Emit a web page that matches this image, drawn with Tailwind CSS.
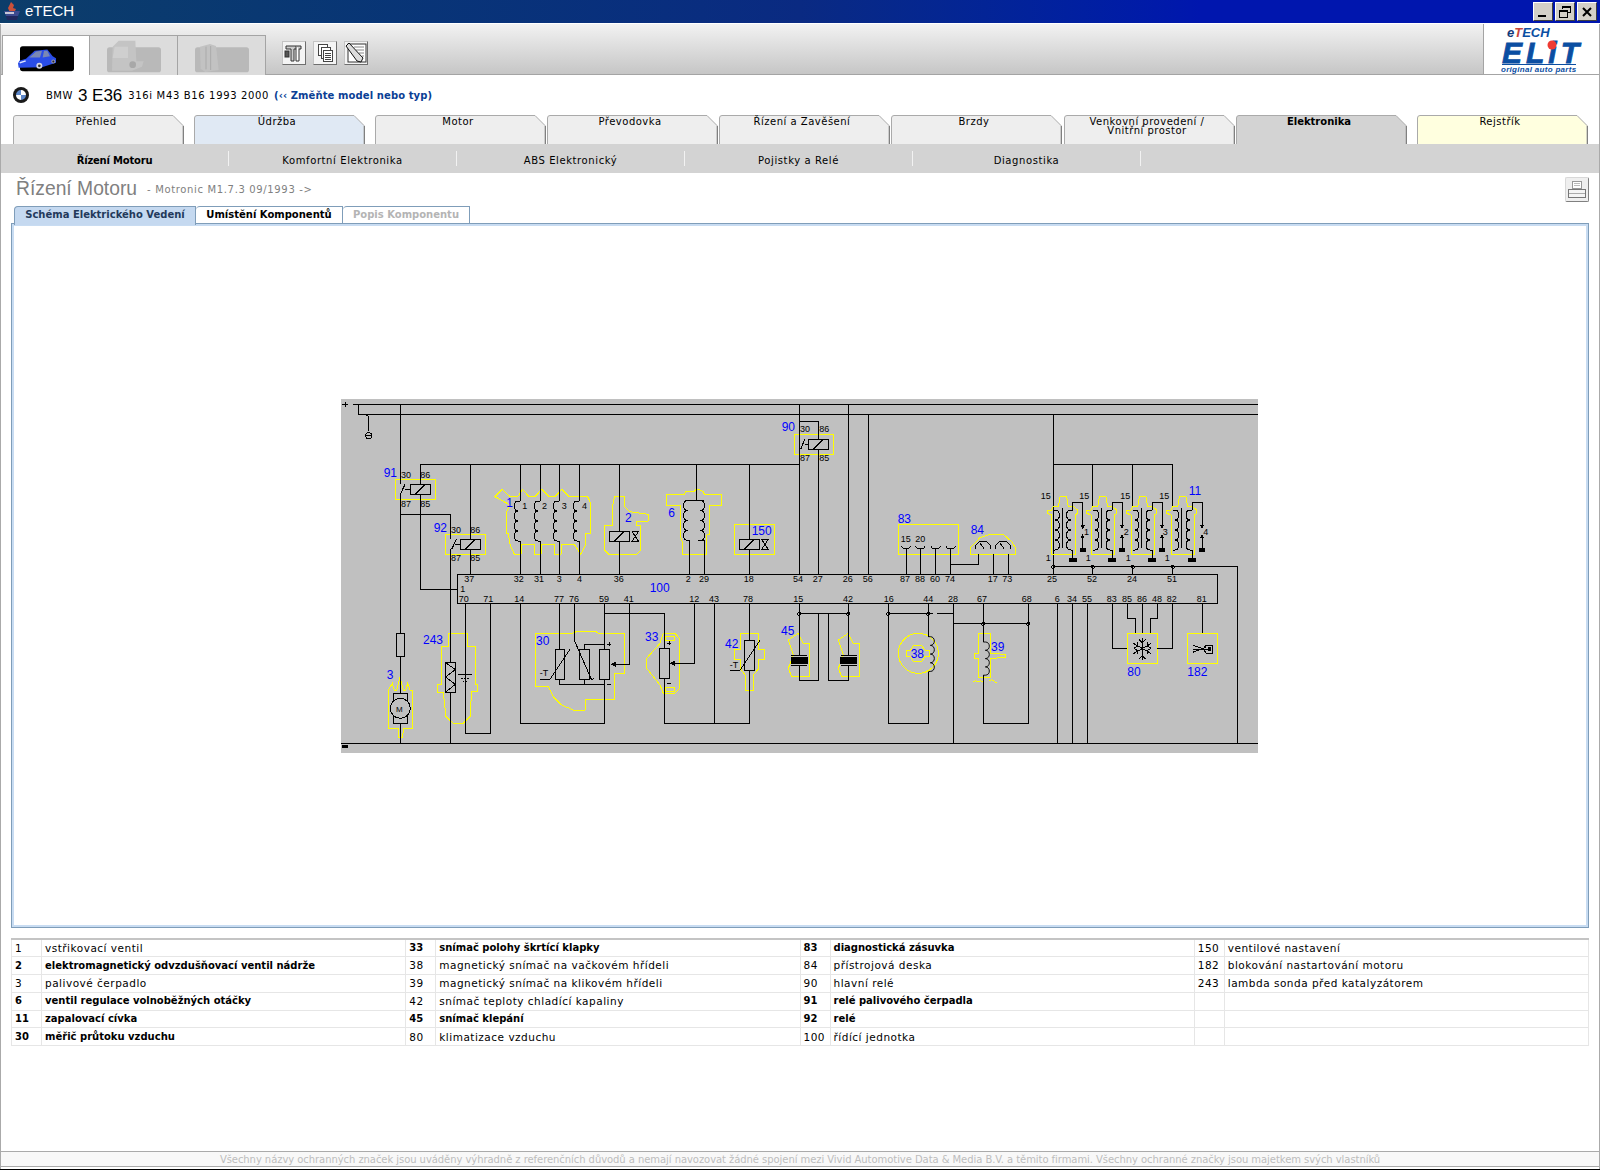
<!DOCTYPE html>
<html lang="cs">
<head>
    <meta charset="UTF-8">
    <title>eTECH</title>
    <script src="https://cdn.jsdelivr.net/npm/@tailwindcss/browser@4"></script>
</head>
<body class="bg-white font-['DejaVu_Sans',sans-serif] text-[10px] text-black">
<div class="flex flex-col w-[1600px] h-[1171px] overflow-hidden">

    <!-- title bar -->
    <div class="flex items-center h-[23px] shrink-0 bg-gradient-to-r from-[#0c3d6a] via-[#0a2a82] via-50% to-[#0016ae] to-75%">
        <svg class="ml-[2px] w-[21px] h-[21px]" viewBox="0 0 21 21">
            <path d="M9 1l3 3-1 3 3 1-2 4H8L6 7z" fill="#c9503a"/>
            <path d="M2 10h16l-2 5H4z" fill="#3b4a8f"/>
            <path d="M4 15h12l-1 4H5z" fill="#20285e"/>
            <path d="M3 11h9v2H3z" fill="#c6c6d8"/>
        </svg>
        <span class="ml-[2px] font-['Liberation_Sans',sans-serif] text-[15px] text-white">eTECH</span>
        <div class="ml-auto mr-[3px] flex gap-[2px]">
            <div class="w-[20px] h-[19px] bg-[#d4d0c8] border border-t-white border-l-white border-r-[#404040] border-b-[#404040] flex items-end justify-center pb-[3px]"><div class="w-[8px] h-[2px] bg-black mr-[2px]"></div></div>
            <div class="w-[20px] h-[19px] bg-[#d4d0c8] border border-t-white border-l-white border-r-[#404040] border-b-[#404040] flex items-center justify-center">
                <svg class="w-[12px] h-[12px]" viewBox="0 0 12 12" fill="none" stroke="#000" shape-rendering="crispEdges"><path d="M3.5 3V.5h8v6H9M3.5 1.5h8"/><path d="M.5 4.5h8v7h-8zM.5 5.5h8"/></svg>
            </div>
            <div class="w-[20px] h-[19px] bg-[#d4d0c8] border border-t-white border-l-white border-r-[#404040] border-b-[#404040] flex items-center justify-center">
                <svg class="w-[10px] h-[10px]" viewBox="0 0 10 10" stroke="#000" stroke-width="2"><path d="M1 1l8 8M9 1l-8 8"/></svg>
            </div>
        </div>
    </div>

    <div class="flex flex-col flex-1 border-x border-[#aaaaaa] mt-px min-h-0">
        <!-- toolbar -->
        <div class="flex h-[51px] shrink-0 bg-gradient-to-b from-[#f2f2f2] to-[#c6c6c6] border-b border-[#a4a4a4]">
            <div class="flex self-end ml-px -mb-px h-[40px]">
                <div class="w-[88px] bg-white border-x border-t border-[#a4a4a4] flex items-start justify-center pt-[9px]">
                    <svg class="w-[60px] h-[27px]" viewBox="42 135 180 80">
                        <rect x="54" y="138" width="162" height="75" rx="8" fill="#000"/>
                        <path d="M48 190l4-8 20-6 26-24 38-4 16 20 10 6v14l-42 13-70 2z" fill="#2a4de8"/>
                        <path d="M82 172l20-18 18-2-6 20zM122 172l4-20 10 0 8 16z" fill="#7a88b4"/>
                        <path d="M52 186l18-6 2 4-18 6z" fill="#dfe6ff"/>
                        <circle cx="112" cy="197" r="9" fill="#d6d6e6"/><circle cx="112" cy="197" r="4" fill="#333"/>
                        <circle cx="154" cy="184" r="6" fill="#99a"/><circle cx="154" cy="184" r="3" fill="#223"/>
                    </svg>
                </div>
                <div class="w-[88px] bg-[#dcdcdc] border-r border-t border-[#a4a4a4] flex items-start justify-center pt-[2px]">
                    <svg class="w-[60px] h-[36px]" viewBox="36 20 180 108">
                        <rect x="45" y="48" width="162" height="75" rx="8" fill="#b9b9b9"/>
                        <path d="M62 46l18-18h50l3 62h22l-5 16-30 12H60z" fill="#c4c4c4"/>
                        <path d="M68 46h40v34H62z" fill="#cfcfcf"/>
                        <circle cx="122" cy="100" r="10" fill="#a8a8a8"/>
                    </svg>
                </div>
                <div class="w-[88px] bg-[#dcdcdc] border-r border-t border-[#a4a4a4] flex items-start justify-center pt-[2px]">
                    <svg class="w-[60px] h-[36px]" viewBox="300 20 180 108">
                        <rect x="309" y="48" width="162" height="75" rx="8" fill="#b9b9b9"/>
                        <path d="M324 46l30-8 18 6 8 72-40 6-14-10z" fill="#c2c2c2"/>
                        <path d="M342 46v68M356 44v72" stroke="#aaaaaa" stroke-width="3"/>
                    </svg>
                </div>
            </div>
            <div class="flex gap-[7px] ml-[16px] mt-[17px]">
                <div class="w-[24px] h-[24px] bg-[#f4f4f4] border border-t-[#c4c4c4] border-l-[#c4c4c4] border-r-[#6e6e6e] border-b-[#6e6e6e] flex items-center justify-center">
                    <svg class="w-[20px] h-[20px]" viewBox="0 0 20 20" fill="none" stroke="#333"><path d="M2 3h15v3H10v12H7V6H2z" fill="#cccccc"/><path d="M12 3v15h3V6" fill="#ffffff"/><rect x="1" y="8" width="4" height="6" fill="#555"/></svg>
                </div>
                <div class="w-[24px] h-[24px] bg-[#f4f4f4] border border-t-[#c4c4c4] border-l-[#c4c4c4] border-r-[#6e6e6e] border-b-[#6e6e6e] flex items-center justify-center">
                    <svg class="w-[20px] h-[20px]" viewBox="0 0 20 20" fill="#fff" stroke="#444" shape-rendering="crispEdges"><rect x="3.5" y="1.5" width="9" height="11"/><rect x="6.5" y="4.5" width="9" height="11"/><rect x="8.5" y="7.5" width="9" height="11"/><path d="M10 10h6M10 12h6M10 14h6M10 16h6"/></svg>
                </div>
                <div class="w-[24px] h-[24px] bg-[#f4f4f4] border border-t-[#c4c4c4] border-l-[#c4c4c4] border-r-[#6e6e6e] border-b-[#6e6e6e] flex items-center justify-center">
                    <svg class="w-[22px] h-[22px]" viewBox="0 0 22 22"><rect x="3" y="2" width="18" height="18" fill="#fff" stroke="#333"/><path d="M9 5h10M11 8h8M14 11h5M17 14h2" stroke="#888"/><path d="M1 4l3-3 14 15-2 4-4-1z" fill="#ddd" stroke="#111"/></svg>
                </div>
            </div>
            <div class="ml-auto w-[116px] bg-white border-l border-[#a4a4a4]">
                <svg class="w-[115px] h-[50px]" viewBox="1485 24 115 50">
                    <text x="1508" y="37" font-family="Liberation Sans" font-weight="700" font-style="italic" font-size="13" fill="#0b4ea2"><tspan fill="#123a7a">e</tspan><tspan fill="#c8453c">T</tspan>ECH</text>
                    <text x="1503" y="63" font-family="Liberation Sans" font-weight="700" font-style="italic" font-size="30" fill="#0b4ea2" letter-spacing="4" stroke="#0b4ea2" stroke-width=".8">ELiT</text>
                    <circle cx="1553" cy="45" r="4.5" fill="#ee3b33"/>
                    <rect x="1503" y="64" width="74" height="1" fill="#0b4ea2"/>
                    <text x="1502" y="72" font-family="Liberation Sans" font-weight="700" font-style="italic" font-size="8" fill="#0b4ea2" letter-spacing=".3">original auto parts</text>
                </svg>
            </div>
        </div>

        <!-- vehicle row -->
        <div class="flex items-center h-[40px] shrink-0 pl-[12px]">
            <svg class="w-[16px] h-[16px]" viewBox="0 0 16 16">
                <circle cx="8" cy="8" r="8" fill="#1a1a1a"/>
                <path d="M8 3a5 5 0 0 1 5 5H8zM8 13a5 5 0 0 1-5-5h5z" fill="#ffffff"/>
                <path d="M8 3a5 5 0 0 0-5 5h5zM8 13a5 5 0 0 0 5-5H8z" fill="#5c86c8"/>
            </svg>
            <span class="ml-[17px] tracking-[0.5px]">BMW</span>
            <span class="ml-[5px] font-['Liberation_Sans',sans-serif] text-[17px] font-medium leading-none">3 E36</span>
            <span class="ml-[6px] tracking-[0.65px]">316i M43 B16 1993 2000</span>
            <span class="ml-[5px] font-bold text-[#0a4095] tracking-[0.1px]">(‹‹ Změňte model nebo typ)</span>
        </div>

        <!-- main tabs -->
        <div class="flex h-[29px] shrink-0 pl-[12px] text-center tracking-[0.5px] leading-[11px]">
            <div class="relative w-[171px] mr-[10px] pt-px pr-[5px]">
                <svg class="absolute inset-0" width="171" height="29"><path d="M.5 29V3Q.5.5 3 .5H160l10 10V29" fill="#eeeeee" stroke="#aaaaaa"/><path d="M170.5 11V29" stroke="#808080" stroke-width="1"/></svg>
                <span class="relative">Přehled</span>
            </div>
            <div class="relative w-[171px] mr-[10px] pt-px pr-[5px]">
                <svg class="absolute inset-0" width="171" height="29"><path d="M.5 29V3Q.5.5 3 .5H160l10 10V29" fill="#e0e9f4" stroke="#aaaaaa"/><path d="M170.5 11V29" stroke="#808080"/></svg>
                <span class="relative">Údržba</span>
            </div>
            <div class="relative w-[171px] mr-px pt-px pr-[5px]">
                <svg class="absolute inset-0" width="171" height="29"><path d="M.5 29V3Q.5.5 3 .5H160l10 10V29" fill="#eeeeee" stroke="#aaaaaa"/><path d="M170.5 11V29" stroke="#808080"/></svg>
                <span class="relative">Motor</span>
            </div>
            <div class="relative w-[171px] mr-px pt-px pr-[5px]">
                <svg class="absolute inset-0" width="171" height="29"><path d="M.5 29V3Q.5.5 3 .5H160l10 10V29" fill="#eeeeee" stroke="#aaaaaa"/><path d="M170.5 11V29" stroke="#808080"/></svg>
                <span class="relative">Převodovka</span>
            </div>
            <div class="relative w-[171px] mr-px pt-px pr-[5px]">
                <svg class="absolute inset-0" width="171" height="29"><path d="M.5 29V3Q.5.5 3 .5H160l10 10V29" fill="#eeeeee" stroke="#aaaaaa"/><path d="M170.5 11V29" stroke="#808080"/></svg>
                <span class="relative">Řízení a Zavěšení</span>
            </div>
            <div class="relative w-[171px] mr-[2px] pt-px pr-[5px]">
                <svg class="absolute inset-0" width="171" height="29"><path d="M.5 29V3Q.5.5 3 .5H160l10 10V29" fill="#eeeeee" stroke="#aaaaaa"/><path d="M170.5 11V29" stroke="#808080"/></svg>
                <span class="relative">Brzdy</span>
            </div>
            <div class="relative w-[171px] mr-px pt-[2px] pr-[5px] leading-[9px]">
                <svg class="absolute inset-0" width="171" height="29"><path d="M.5 29V3Q.5.5 3 .5H160l10 10V29" fill="#eeeeee" stroke="#aaaaaa"/><path d="M170.5 11V29" stroke="#808080"/></svg>
                <span class="relative block">Venkovní provedení /<br>Vnitřní prostor</span>
            </div>
            <div class="relative w-[171px] mr-[10px] pt-px pr-[5px] font-bold tracking-normal">
                <svg class="absolute inset-0" width="171" height="29"><path d="M.5 29V3Q.5.5 3 .5H160l10 10V29" fill="#d3d3d3" stroke="#aaaaaa"/><path d="M170.5 11V29" stroke="#808080"/></svg>
                <span class="relative">Elektronika</span>
            </div>
            <div class="relative w-[171px] pt-px pr-[5px]">
                <svg class="absolute inset-0" width="171" height="29"><path d="M.5 29V3Q.5.5 3 .5H160l10 10V29" fill="#ffffdf" stroke="#aaaaaa"/><path d="M170.5 11V29" stroke="#808080"/></svg>
                <span class="relative">Rejstřík</span>
            </div>
        </div>

        <!-- sub navigation -->
        <div class="flex items-center h-[29px] shrink-0 bg-[#d3d3d3] tracking-[0.6px]">
            <div class="w-[228px] h-[15px] leading-[19px] text-center font-bold tracking-[-0.2px] border-r border-[#f2f2f2]">Řízení Motoru</div>
            <div class="w-[228px] h-[15px] leading-[19px] text-center border-r border-[#f2f2f2]">Komfortní Elektronika</div>
            <div class="w-[228px] h-[15px] leading-[19px] text-center border-r border-[#f2f2f2]">ABS Elektronický</div>
            <div class="w-[228px] h-[15px] leading-[19px] text-center border-r border-[#f2f2f2]">Pojistky a Relé</div>
            <div class="w-[228px] h-[15px] leading-[19px] text-center border-r border-[#f2f2f2]">Diagnostika</div>
        </div>

        <!-- heading -->
        <div class="flex items-center h-[33px] shrink-0 pl-[15px] pr-[10px] text-[#808080]">
            <span class="font-['Liberation_Sans',sans-serif] text-[19.3px]">Řízení Motoru</span>
            <span class="ml-[10px] tracking-[0.65px]">- Motronic M1.7.3 09/1993 -&gt;</span>
            <div class="ml-auto w-[24px] h-[25px] rounded-[2px] bg-[#efefef] border border-t-[#d8d8d8] border-l-[#d8d8d8] border-r-[#808080] border-b-[#808080] flex items-center justify-center">
                <svg class="w-[20px] h-[20px]" viewBox="0 0 20 20" shape-rendering="crispEdges"><path d="M5.5 1.5h9v7h-9z" fill="#fff" stroke="#999"/><path d="M7 3.5h6M7 5.5h6" stroke="#bbb"/><path d="M1.5 9.5h17v8h-17z" fill="#f4f4f4" stroke="#777"/><path d="M2 13h16v1H2z" fill="#aaa"/></svg>
            </div>
        </div>

        <!-- diagram tabs -->
        <div class="flex h-[18px] shrink-0 ml-[13px] font-bold text-center leading-[16px] relative z-10 -mb-px">
            <div class="w-[182px] h-[19px] bg-[#c5d9f0] border-x border-t border-[#7f9db9] rounded-tl-[4px] text-[#23395b]">Schéma Elektrického Vedení</div>
            <div class="w-[147px] h-[18px] bg-white border-r border-t border-b border-[#7f9db9] rounded-tl-[4px]">Umístění Komponentů</div>
            <div class="w-[127px] h-[18px] bg-white border-r border-t border-b border-[#7f9db9] text-[#b4b4b4] rounded-tl-[4px]">Popis Komponentu</div>
        </div>

        <!-- diagram panel -->
        <div class="mx-[10px] h-[705px] shrink-0 border border-[#7f9db9] p-[2px] bg-[#c8dcf2]">
            <div class="w-full h-full bg-white flex items-center justify-center pr-[2px]">
                <svg class="w-[917px] h-[354px]" viewBox="18 12 2751 1062" shape-rendering="crispEdges" font-family="Liberation Sans">
                    <defs>
                        <path id="coil" d="M0 0h-6c-16 0-16 30 0 30c-16 0-16 30 0 30c-16 0-16 30 0 30c-16 0-16 30 0 30h6" fill="none"/>
                        <g id="relay">
                            <rect x="0" y="0" width="60" height="30" fill="none"/>
                            <path d="M15 30L45 0" fill="none"/>
                        </g>
                        <g id="ign">
                            <path d="M772 345h13l5-10h15l5-30h20l5 30h15l12 10v10l-7 5v118h-70V360l-13-5z" fill="none" stroke="#ffff00"/>
                            <use href="#coil" transform="translate(790 345) scale(-1 1)"/>
                            <path d="M817 340v118" />
                            <use href="#coil" transform="translate(848 345)"/>
                            <path d="M848 345v-23h30v73M878 425v35M848 465v25"/>
                            <path d="M874 392h8l-4 8zM874 428h8l-4-8z" fill="#000"/>
                            <rect x="870" y="460" width="18" height="10" fill="#000" stroke="none"/>
                            <rect x="836" y="490" width="24" height="10" fill="#000" stroke="none"/>
                            <circle cx="790" cy="515" r="5" fill="none"/>
                        </g>
                    </defs>
                    <rect x="18" y="12" width="2751" height="1062" fill="#c0c0c0"/>

                    <g fill="none" stroke="#ffff00" stroke-width="3">
                        <rect x="181" y="253" width="120" height="60"/>
                        <rect x="331" y="418" width="120" height="60"/>
                        <path d="M480 305l22-22 23 22h23l15-22 19 22h18l20-22 23 22h17l20-22 23 22h55l7 15v95h-13v33l-14 30-20-30h-38l-2 30h-20v-30h-38l-2 30h-20v-30h-38l-2 30h-20l-13-30-5-33h-5v-65l10-20z"/>
                        <path d="M838 305h30v30l17 15 55 8v20l-37 2v10h14v75l-12 13h-83l-14-13v-73h24v-52z"/>
                        <path d="M995 298h53l4-8h26l4-7h8l15 7 3 8h52v34h-38v86l-7 2v58h-72v-33l-8-27v-86h-40z"/>
                        <rect x="1198" y="388" width="120" height="90"/>
                        <path d="M340 715h57v40h25v113h6v22h-18l-5 75-20 20h-30l-22-20-8-73h-18v-24h11V755h22z"/>
                        <path d="M160 885l12-20 6 20h7l10-40 10 40h7l6-20 7 20h8v115h-28l-2 28h-13v-28h-30z"/>
                        <path d="M602 715h108l20-7h50l10 7h78v121h-30v76h-86l-2 33h-35l-35-15-25-25-15-30h-38z"/>
                        <path d="M985 715h35l13 15v150l-13 15h-35l-10-25-40-50v-30l40-45z"/>
                        <path d="M990 725h28v10h-28zM990 876h28v14h-28z"/>
                        <path d="M1217 715h53v47h18v30h-18v30l-15 18v47h-25v-47l-13-18v-30h-19v-30h19z"/>
                        <g transform="translate(1365 0)">
                            <rect x="13" y="118" width="118" height="60"/>
                            <path d="M25 715l15 30h17v100H5l-10-25 15-40-15-45z"/>
                            <path d="M175 715l15 30h17v100h-52l-10-25 15-40-15-45z"/>
                            <rect x="325" y="388" width="180" height="90"/>
                            <path d="M541 478v-20l29-30 30-10h40l25 22 12 20v18z"/>
                            <circle cx="385" cy="775" r="60"/>
                            <path d="M350 765h12l8-13h25l10 13h13v20h-13l-10 15h-25l-8-15h-12z"/>
                            <path d="M565 715h35v60l45 3v10l-45 2v58h-35v-58h-12v-15h12z"/>
                            <path d="M548 862l8-5 8 4 8-4 8 4M596 858l8-4 8 4 8 6"/>
                            <rect x="1012" y="715" width="90" height="90"/>
                            <rect x="1192" y="715" width="90" height="90"/>
                        </g>
                    </g>

                    <g fill="none" stroke="#000" stroke-width="3">
                        <!-- rails -->
                        <path d="M55 28H2769M70 28v30H2769M18 1045H2769"/>
                        <path d="M30 20v16M22 28h16" />
                        <path d="M100 58l-8 6M100 62v46"/>
                        <circle cx="101" cy="122" r="9"/>
                        <path d="M92 120h18"/>
                        <path d="M196 28v240M196 298v417M196 785v110M196 985v60"/>
                        <rect x="184" y="715" width="24" height="70"/>
                        <path d="M256 208H1393M1393 28v510"/>
                        <path d="M256 208v60M256 298v285h112M196 358h150v75M346 463v339M346 892v153"/>
                        <path d="M406 208v225M406 463v75"/>
                        <path d="M196 298l14-30M350 463l14-30M211 283h15M361 448h15"/>
                        <use href="#relay" x="226" y="268"/>
                        <use href="#relay" x="376" y="433"/>

                        <!-- injectors -->
                        <path d="M556 208v110M556 438v100M616 208v110M616 438v100M673 208v110M673 438v100M733 208v110M733 438v100"/>
                        <use href="#coil" x="556" y="318"/>
                        <use href="#coil" x="616" y="318"/>
                        <use href="#coil" x="673" y="318"/>
                        <use href="#coil" x="733" y="318"/>

                        <path d="M853 208v201M853 439v99"/>
                        <use href="#relay" x="823" y="409"/>
                        <path d="M891 409h20l-20 30h20z"/>
                        <path d="M1084 208v108M1064 316h44M1064 436v102M1108 316h-18M1090 436h18v102"/>
                        <use href="#coil" x="1064" y="316"/>
                        <use href="#coil" transform="translate(1090 316) scale(-1 1)"/>
                        <path d="M1243 208v225M1243 463v75"/>
                        <use href="#relay" x="1213" y="433"/>
                        <path d="M1280 433h20l-20 30h20z"/>

                        <!-- control unit -->
                        <rect x="368" y="538" width="2280" height="88"/>

                        <!-- below control unit -->
                        <path d="M391 626v389h75V626"/>
                        <path d="M370 838h41M378 851h6M388 851h6M397 851h6M385 858h3M394 858h3"/>
                        <rect x="331" y="802" width="30" height="90"/>
                        <path d="M331 802l30 22-30 22 30 22-30 24"/>
                        <rect x="175" y="895" width="43" height="90"/>
                        <circle cx="196" cy="940" r="30" fill="#c0c0c0"/>

                        <path d="M556 626v359h252V853M808 626v137M673 626v137M673 853v15H808M748 868v-15M718 626v110l52 119M770 855l8-6M748 763v-15h60"/>
                        <rect x="661" y="763" width="28" height="90"/>
                        <rect x="733" y="763" width="30" height="90"/>
                        <rect x="793" y="763" width="30" height="90"/>
                        <path d="M645 853l60-90M615 852h30M841 808h42V626"/>
                        <path d="M808 656h180v104M988 850v135h255v-159M1243 626v110M1138 626v359M1078 626v179h-60"/>
                        <rect x="974" y="760" width="29" height="90"/>
                        <rect x="1229" y="736" width="30" height="90"/>
                        <path d="M1215 826l60-90M1185 826h30"/>
                        <path d="M829 808l12-6v12zM1006 805l12-6v12z" fill="#000"/>
                        <path d="M817 747h12M823 741v12M817 868h12M997 745h12M1003 739v12M997 865h12"/>

                        <g transform="translate(1365 0)">
                            <path d="M28 28v510M28 80h57v53M85 163v375M175 28v510M235 58v480"/>
                            <path d="M32 163l12-30M46 148h9"/>
                            <use href="#relay" x="55" y="133"/>
                            <path d="M348 462v76M391 462v76M437 462v76M482 462v76M482 508h83v-30M610 478v60M655 478v60"/>
                            <path d="M334 452a14 10 0 0 0 28 0M377 452a14 10 0 0 0 28 0M423 452a14 10 0 0 0 28 0M468 452a14 10 0 0 0 28 0"/>
                            <path d="M555 462a24 24 0 0 1 48 0M615 462a24 24 0 0 1 48 0M570 445l12 15M630 445l12 15"/>
                            <path d="M790 58v480M790 208h357v130M907 208v130M1027 208v130M790 515H1343v530M907 515v23M1027 515v23M1147 515v23"/>
                            <path d="M790 338v7M790 465v50"/>
                            <use href="#ign"/>
                            <use href="#ign" x="118"/>
                            <use href="#ign" x="238"/>
                            <use href="#ign" x="358"/>
                            <path d="M28 626v154M28 812v44h57V656M28 656h147M115 656v200h60v-44M175 626v154"/>
                            <circle cx="28" cy="656" r="5"/><circle cx="175" cy="656" r="5"/>
                            <path d="M3 780h48M3 812h48M152 780h48M152 812h48"/>
                            <rect x="3" y="786" width="48" height="18" fill="#000"/>
                            <rect x="152" y="786" width="48" height="18" fill="#000"/>
                            <path d="M295 626v359h120V830M415 626v100M295 656h135M440 656h50M490 626v419M490 686h225"/>
                            <circle cx="295" cy="656" r="5"/><circle cx="415" cy="656" r="5"/><circle cx="580" cy="686" r="5"/><circle cx="715" cy="686" r="5"/>
                            <use href="#coil" transform="translate(415 725) scale(-1 .87)"/>
                            <path d="M580 626v115M580 841v144h135V626"/>
                            <use href="#coil" transform="translate(580 741) scale(-1 .83)"/>
                            <path d="M802 626v419M847 626v419M892 626v419"/>
                            <path d="M967 626v134h45M1012 626v44h25v45M1057 626v89M1102 626v44h-22v45M1147 626v134h-45M1237 626v89"/>
                            <path d="M1057 730v65M1030 745l54 31M1084 745l-54 31M1047 733l10 10 10-10M1047 792l10-10 10 10M1031 760l10-6v-12M1083 760l-10-6v-12M1031 760l10 6v12M1083 760l-10 6v12"/>
                            <path d="M1208 750l40 15M1208 772l40-15M1208 762h50M1248 750h18v24h-18l-8-12z"/>
                            <rect x="1256" y="756" width="6" height="10" fill="#000"/>
                        </g>
                        <rect x="22" y="1050" width="16" height="8" fill="#000"/>
                    </g>

                    <!-- small labels -->
                    <g font-size="27" fill="#000">
                        <text x="198" y="248">30</text><text x="256" y="248">86</text><text x="198" y="335">87</text><text x="256" y="335">85</text>
                        <text x="348" y="413">30</text><text x="406" y="413">86</text><text x="348" y="497">87</text><text x="406" y="497">85</text>
                        <text x="562" y="341">1</text><text x="621" y="341">2</text><text x="680" y="341">3</text><text x="741" y="341">4</text>
                        <text x="388" y="560">37</text><text x="536" y="560">32</text><text x="597" y="560">31</text><text x="665" y="560">3</text><text x="726" y="560">4</text><text x="836" y="560">36</text><text x="1052" y="560">2</text><text x="1092" y="560">29</text><text x="1226" y="560">18</text><text x="1374" y="560">54</text>
                        <text x="376" y="590">1</text>
                        <text x="371" y="620">70</text><text x="445" y="620">71</text><text x="538" y="620">14</text><text x="657" y="620">77</text><text x="702" y="620">76</text><text x="792" y="620">59</text><text x="866" y="620">41</text><text x="1063" y="620">12</text><text x="1122" y="620">43</text><text x="1224" y="620">78</text><text x="1375" y="620">15</text>
                        <text x="183" y="950" font-size="24">M</text>
                        <text x="614" y="842">-T</text><text x="1184" y="820">-T</text>
                        <g transform="translate(1365 0)">
                            <text x="30" y="112">30</text><text x="88" y="112">86</text><text x="30" y="198">87</text><text x="88" y="198">85</text>
                            <text x="68" y="560">27</text><text x="158" y="560">26</text><text x="218" y="560">56</text><text x="330" y="560">87</text><text x="375" y="560">88</text><text x="420" y="560">60</text><text x="465" y="560">74</text><text x="593" y="560">17</text><text x="637" y="560">73</text><text x="771" y="560">25</text><text x="891" y="560">52</text><text x="1011" y="560">24</text><text x="1131" y="560">51</text>
                            <text x="159" y="620">42</text><text x="281" y="620">16</text><text x="400" y="620">44</text><text x="474" y="620">28</text><text x="561" y="620">67</text><text x="695" y="620">68</text><text x="794" y="620">6</text><text x="831" y="620">34</text><text x="876" y="620">55</text><text x="950" y="620">83</text><text x="996" y="620">85</text><text x="1041" y="620">86</text><text x="1086" y="620">48</text><text x="1130" y="620">82</text><text x="1220" y="620">81</text>
                            <text x="332" y="440">15</text><text x="376" y="440">20</text>
                            <text x="752" y="311">15</text><text x="868" y="311">15</text><text x="991" y="311">15</text><text x="1108" y="311">15</text>
                            <text x="767" y="499">1</text><text x="887" y="499">1</text><text x="1007" y="499">1</text><text x="1124" y="499">1</text>
                            <text x="882" y="419">1</text><text x="1001" y="419">2</text><text x="1118" y="419">3</text><text x="1240" y="419">4</text>
                        </g>
                    </g>

                    <!-- component numbers -->
                    <g font-size="36" fill="#0000ff">
                        <text x="146" y="245">91</text><text x="296" y="410">92</text><text x="514" y="335">1</text><text x="870" y="381">2</text><text x="1000" y="365">6</text><text x="1250" y="419">150</text>
                        <text x="944" y="590">100</text><text x="264" y="747">243</text><text x="155" y="851">3</text><text x="603" y="749">30</text><text x="930" y="737">33</text><text x="1170" y="758">42</text><text x="1338" y="719">45</text><text x="1340" y="109">90</text>
                        <g transform="translate(1365 0)">
                            <text x="323" y="383">83</text><text x="542" y="416">84</text><text x="1196" y="299">11</text><text x="362" y="788">38</text><text x="603" y="769">39</text><text x="1012" y="842">80</text><text x="1192" y="842">182</text>
                        </g>
                    </g>
                </svg>
            </div>
        </div>

        <!-- legend -->
        <table class="mx-[10px] mt-[10px] w-[1578px] table-fixed border-collapse border-t-2 border-[#c4c4c4] text-[10.5px] tracking-[0.5px] shrink-0">
            <colgroup><col class="w-[30px]"><col><col class="w-[30px]"><col><col class="w-[30px]"><col><col class="w-[30px]"><col></colgroup>
            <tbody class="[&_td]:h-[17.8px] [&_td]:border [&_td]:border-[#e6e6e6] [&_td]:pl-[3px] [&_td]:py-0 [&_td]:leading-none [&_td]:whitespace-nowrap">
                <tr>
                    <td>1</td><td>vstřikovací ventil</td>
                    <td class="font-bold text-[10px] tracking-normal">33</td><td class="font-bold text-[10px] tracking-normal">snímač polohy škrtící klapky</td>
                    <td class="font-bold text-[10px] tracking-normal">83</td><td class="font-bold text-[10px] tracking-normal">diagnostická zásuvka</td>
                    <td>150</td><td>ventilové nastavení</td>
                </tr>
                <tr>
                    <td class="font-bold text-[10px] tracking-normal">2</td><td class="font-bold text-[10px] tracking-normal">elektromagnetický odvzdušňovací ventil nádrže</td>
                    <td>38</td><td>magnetický snímač na vačkovém hřídeli</td>
                    <td>84</td><td>přístrojová deska</td>
                    <td>182</td><td>blokování nastartování motoru</td>
                </tr>
                <tr>
                    <td>3</td><td>palivové čerpadlo</td>
                    <td>39</td><td>magnetický snímač na klikovém hřídeli</td>
                    <td>90</td><td>hlavní relé</td>
                    <td>243</td><td>lambda sonda před katalyzátorem</td>
                </tr>
                <tr>
                    <td class="font-bold text-[10px] tracking-normal">6</td><td class="font-bold text-[10px] tracking-normal">ventil regulace volnoběžných otáčky</td>
                    <td>42</td><td>snímač teploty chladící kapaliny</td>
                    <td class="font-bold text-[10px] tracking-normal">91</td><td class="font-bold text-[10px] tracking-normal">relé palivového čerpadla</td>
                    <td></td><td></td>
                </tr>
                <tr>
                    <td class="font-bold text-[10px] tracking-normal">11</td><td class="font-bold text-[10px] tracking-normal">zapalovací cívka</td>
                    <td class="font-bold text-[10px] tracking-normal">45</td><td class="font-bold text-[10px] tracking-normal">snímač klepání</td>
                    <td class="font-bold text-[10px] tracking-normal">92</td><td class="font-bold text-[10px] tracking-normal">relé</td>
                    <td></td><td></td>
                </tr>
                <tr>
                    <td class="font-bold text-[10px] tracking-normal">30</td><td class="font-bold text-[10px] tracking-normal">měřič průtoku vzduchu</td>
                    <td>80</td><td>klimatizace vzduchu</td>
                    <td>100</td><td>řídící jednotka</td>
                    <td></td><td></td>
                </tr>
            </tbody>
        </table>

        <!-- footer -->
        <div class="mt-auto h-[16px] shrink-0 bg-[#f8f8f8] border-y border-[#aaaaaa] text-center text-[#bdbdbd] leading-[15px] tracking-[-0.06px]">Všechny názvy ochranných značek jsou uváděny výhradně z referenčních důvodů a nemají navozovat žádné spojení mezi Vivid Automotive Data &amp; Media B.V. a těmito firmami. Všechny ochranné značky jsou majetkem svých vlastníků</div>
        <div class="h-[2px] shrink-0"></div>
    </div>
    <div class="h-px shrink-0 bg-black"></div>
    <div class="h-px shrink-0"></div>
</div>
</body>
</html>
